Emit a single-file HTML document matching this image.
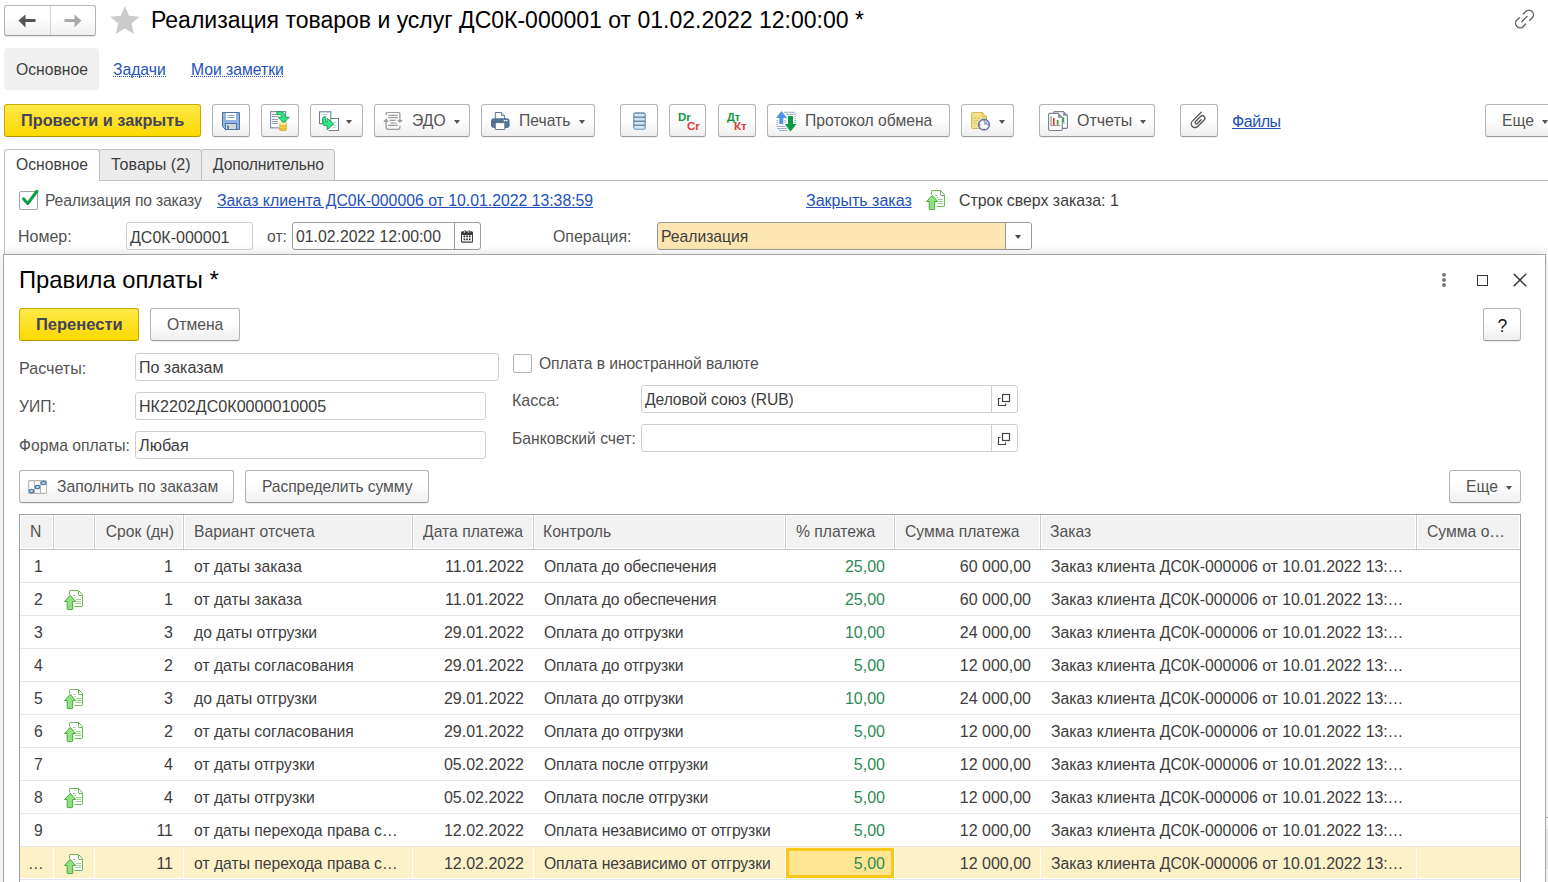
<!DOCTYPE html>
<html><head><meta charset="utf-8">
<style>
*{box-sizing:border-box;margin:0;padding:0}
html,body{width:1548px;height:882px;overflow:hidden;background:#fff;font-family:"Liberation Sans",sans-serif;font-size:15.7px;color:#525252}
.a{position:absolute}
.t{position:absolute;white-space:nowrap;line-height:18px}
.btn{position:absolute;border:1px solid #b4b4b4;border-bottom-color:#9c9c9c;border-radius:3px;background:linear-gradient(#fff 0%,#fff 40%,#efefef 100%);box-shadow:0 1px 0 rgba(0,0,0,.08)}
.ybtn{position:absolute;border:1px solid #c9a800;border-bottom-color:#b39500;border-radius:3px;background:linear-gradient(#ffe94a 0%,#fbd900 100%)}
.fld{position:absolute;border:1px solid #cfcfcf;border-radius:3px;background:#fff}
.lnk{color:#2352b8;text-decoration:underline}
.dd{position:absolute;width:0;height:0;border-left:3.5px solid transparent;border-right:3.5px solid transparent;border-top:4px solid #555}
</style></head><body>
<svg width="0" height="0" style="position:absolute"><defs>
<g id="upd">
 <path d="M5.5 4.5V1.2Q5.5 0.5 6.2 0.5H14.5L18.5 4.5V15.8Q18.5 16.5 17.8 16.5H10.5" fill="#fff" stroke="#6cb85a" stroke-width="1"/>
 <path d="M14.5 0.5V4.8Q14.5 5.5 15.2 5.5H18.5" fill="none" stroke="#6cb85a" stroke-width="1"/>
 <path d="M9 5.5H11.5M10.5 7.5H11.7M12 9.5H17M12.5 11.5H17M11.5 13.5H17" stroke="#8fcb80" stroke-width="0.9"/>
 <path d="M6.3 5.3L11.6 11.5H8.7V18.8Q8.7 19.6 7.9 19.6H4Q3.2 19.6 3.2 18.8V11.5H0.5Z" fill="#92e084" stroke="#48a838" stroke-width="1" stroke-linejoin="round"/>
</g>
</defs></svg>

<!-- ===== TOP BAR ===== -->
<div class="btn" style="left:4px;top:5px;width:92px;height:31px"></div>
<div class="a" style="left:50px;top:6px;width:1px;height:29px;background:#d4d4d4"></div>
<svg class="a" style="left:18px;top:13.6px" width="20" height="15" viewBox="0 0 20 15"><path d="M0.5 6.5L7.5 0.5V5H17.5V8H7.5V13.5Z" fill="#555"/></svg>
<svg class="a" style="left:63px;top:13.6px" width="20" height="15" viewBox="0 0 20 15"><path d="M18.5 6.5L11.5 0.5V5H1.5V8H11.5V13.5Z" fill="#aaa"/></svg>
<svg class="a" style="left:109.5px;top:6px" width="30" height="29" viewBox="0 0 30 29"><path d="M14.85 0.10L18.96 9.74L29.40 10.67L21.51 17.56L23.84 27.78L14.85 22.40L5.86 27.78L8.19 17.56L0.30 10.67L10.74 9.74Z" fill="#cbcbcb"/></svg>
<div class="t" style="left:151px;top:7px;font-size:23px;line-height:26px;color:#000">Реализация товаров и услуг ДС0К-000001 от 01.02.2022 12:00:00 *</div>


<!-- ===== SUB NAV ===== -->
<div class="a" style="left:4px;top:48px;width:95px;height:42px;background:#f0f0f0;border-radius:4px"></div>
<div class="t" style="left:16px;top:61px;color:#3d3d3d">Основное</div>
<div class="t" style="left:113px;top:61px;color:#2352b8">Задачи</div>
<div class="a" style="left:113px;top:76px;width:53px;height:1px;border-top:1px dotted #2352b8"></div>
<div class="t" style="left:191px;top:61px;color:#2352b8">Мои заметки</div>
<div class="a" style="left:191px;top:76px;width:92px;height:1px;border-top:1px dotted #2352b8"></div>

<!-- ===== TOOLBAR ===== -->
<div class="ybtn" style="left:4px;top:104px;width:197px;height:33px"></div>
<div class="t" style="left:21px;top:111px;font-weight:bold;color:#44445a;font-size:16.3px">Провести и закрыть</div>

<div class="btn" style="left:212px;top:104px;width:38px;height:33px"></div>
<div class="btn" style="left:261px;top:104px;width:38px;height:33px"></div>
<div class="btn" style="left:310px;top:104px;width:53px;height:33px"></div>
<div class="btn" style="left:374px;top:104px;width:96px;height:33px"></div>
<div class="btn" style="left:481px;top:104px;width:114px;height:33px"></div>
<div class="btn" style="left:620px;top:104px;width:38px;height:33px"></div>
<div class="btn" style="left:669px;top:104px;width:37px;height:33px"></div>
<div class="btn" style="left:718px;top:104px;width:38px;height:33px"></div>
<div class="btn" style="left:767px;top:104px;width:183px;height:33px"></div>
<div class="btn" style="left:961px;top:104px;width:53px;height:33px"></div>
<div class="btn" style="left:1039px;top:104px;width:116px;height:33px"></div>
<div class="btn" style="left:1180px;top:104px;width:38px;height:33px"></div>
<div class="btn" style="left:1485px;top:104px;width:80px;height:33px"></div>

<div class="t" style="left:412px;top:112px">ЭДО</div>
<div class="t" style="left:519px;top:112px">Печать</div>
<div class="t" style="left:805px;top:112px">Протокол обмена</div>
<div class="t" style="left:1077px;top:112px;font-size:16px">Отчеты</div>
<div class="t lnk" style="left:1232px;top:113px;font-size:16px;letter-spacing:-0.45px">Файлы</div>
<div class="t" style="left:1502px;top:112px">Еще</div>

<div class="dd" style="left:346px;top:120px"></div>
<div class="dd" style="left:454px;top:120px"></div>
<div class="dd" style="left:579px;top:120px"></div>
<div class="dd" style="left:998.5px;top:120px"></div>
<div class="dd" style="left:1140px;top:120px"></div>
<div class="dd" style="left:1542px;top:120px"></div>

<!-- toolbar icons -->
<svg class="a" style="left:222px;top:112px" width="18" height="18" viewBox="0 0 18 18">
 <path d="M0.5 0.5H17.5V17.5H3.5L0.5 14.5Z" fill="#8db4e2" stroke="#4f74a8"/>
 <rect x="4" y="1" width="10" height="7" fill="#fff"/>
 <path d="M5.5 3.5H12.5M5.5 5.5H12.5" stroke="#8aa7cc" stroke-width="1"/>
 <rect x="3.5" y="11.5" width="11" height="6" fill="#d3d9d8" stroke="#4f74a8" stroke-width="1"/>
 <rect x="5" y="13.6" width="2" height="3.4" fill="#5b86c0"/>
</svg>
<svg class="a" style="left:270px;top:111px" width="22" height="21" viewBox="0 0 22 21">
 <rect x="0.6" y="0.6" width="15" height="16.2" fill="#fff" stroke="#8191a8" stroke-width="1.2"/>
 <path d="M2 3.4H8M2 5.4H8M2 8.4H8M2 10.4H8M2 12.4H8" stroke="#8996ab" stroke-width="1"/>
 <ellipse cx="13" cy="18.2" rx="3.9" ry="1.7" fill="#e9c640" stroke="#c9a020" stroke-width="0.5"/>
 <ellipse cx="13" cy="16.2" rx="3.9" ry="1.7" fill="#f3d85a" stroke="#c9a020" stroke-width="0.5"/>
 <ellipse cx="13" cy="14.2" rx="3.9" ry="1.7" fill="#f1d24e" stroke="#c9a020" stroke-width="0.5"/>
 <ellipse cx="13" cy="12.4" rx="3.9" ry="1.5" fill="#fdf3c0" stroke="#d8b840" stroke-width="0.5"/>
 <path d="M7 0.5Q11 0.1 13.6 2Q15.2 3.5 15.4 6.3H19.3L13.5 11.7L8 6.3H12.1Q11.7 4.6 10.3 3.9Q9.2 3.3 7.3 3.7Q6.4 2.2 7 0.5Z" fill="#2fe58a" stroke="#1a9a48" stroke-width="0.9" stroke-linejoin="round"/>
</svg>
<svg class="a" style="left:318px;top:111px" width="22" height="21" viewBox="0 0 22 21">
 <path d="M12.5 7.5H20.5V19.5H10.5" fill="#fff" stroke="#6f8096" stroke-width="1.1"/>
 <path d="M15.5 11.5H18.5M15.5 14.5H18.5M15 16.5H18.5" stroke="#b8c2ce" stroke-width="0.8"/>
 <rect x="1.5" y="0.8" width="11.3" height="11.8" fill="#fff" stroke="#6f8096" stroke-width="1.1"/>
 <path d="M3.8 3.5H9M6 5.5H9" stroke="#a8b4c2" stroke-width="0.8"/>
 <path d="M4.6 7.4Q4.6 5.8 6.15 5.8Q7.7 5.8 7.7 7.4V10.9H9.2V7.3L15.8 13.1L9.2 18.7V14.7H7.2Q4.6 14.7 4.6 12Z" fill="#30e58b" stroke="#1b9a4a" stroke-width="0.9" stroke-linejoin="round"/>
</svg>
<svg class="a" style="left:383px;top:112px" width="21" height="18" viewBox="0 0 21 18">
 <g fill="none" stroke="#9c9c9c" stroke-width="1.3">
 <path d="M3.1 3.2V2.3Q3.1 0.35 5 0.35H15Q16.9 0.35 16.9 2.3V8.5"/>
 <path d="M16.9 13.8V15.3Q16.9 17.3 15 17.3H5Q3.1 17.3 3.1 15.3V9.5"/>
 <path d="M5.2 3.4H14.8M5.2 5.6H14.8M6.6 8.4H12.5M5.2 13.4H14.8"/>
 <path d="M7.2 11H13.7" stroke="#bdbdbd" stroke-width="1.6"/>
 </g>
 <path d="M0.1 9.9H6L3.1 6.6Z M14 8.1H19.9L16.9 11Z" fill="#9c9c9c"/>
</svg>
<svg class="a" style="left:491px;top:112px" width="19" height="19" viewBox="0 0 19 19">
 <path d="M4.3 7V0.5H10.5L13.6 3.6V7" fill="#fff" stroke="#66778a" stroke-width="1"/>
 <path d="M10.5 0.5V3.6H13.6" fill="#dfe6ee" stroke="#66778a" stroke-width="0.9"/>
 <rect x="0.5" y="6.8" width="17.6" height="8.7" rx="2" fill="#55779f" stroke="#3f5f88" stroke-width="0.8"/>
 <path d="M2.5 10.2H16" stroke="#3e5878" stroke-width="1"/>
 <circle cx="13.5" cy="8.6" r="0.9" fill="#fff"/><circle cx="15.6" cy="8.6" r="0.9" fill="#fff"/>
 <path d="M4.3 10.7H13.8V17.5H4.3Z" fill="#fff" stroke="#66778a" stroke-width="1"/>
</svg>
<svg class="a" style="left:633px;top:112px" width="13" height="18" viewBox="0 0 13 18">
 <rect x="0.2" y="0.2" width="12.6" height="17.6" rx="2.2" fill="#6d8daa"/>
 <g fill="#d2e5f5"><rect x="1.3" y="1.8" width="10.4" height="2.6" rx="0.8"/><rect x="1.3" y="5.9" width="10.4" height="2.6" rx="0.8"/><rect x="1.3" y="10" width="10.4" height="2.6" rx="0.8"/><rect x="1.3" y="14.1" width="10.4" height="2.6" rx="0.8"/></g>
</svg>
<div class="a" style="left:678px;top:111px;font:bold 11.4px/13px 'Liberation Sans',sans-serif;color:#109640">Dr</div>
<div class="a" style="left:687px;top:119.3px;font:bold 11.6px/13px 'Liberation Sans',sans-serif;color:#e03a3a">Cr</div>
<div class="a" style="left:727px;top:110.5px;font:bold 11px/13px 'Liberation Sans',sans-serif;color:#109640">Дт</div>
<div class="a" style="left:734px;top:119.3px;font:bold 11.6px/13px 'Liberation Sans',sans-serif;color:#e03a3a">Кт</div>
<svg class="a" style="left:776px;top:111px" width="21" height="21" viewBox="0 0 21 21">
 <path d="M8 1.3H19M10 3.3H20M18.5 5.5H20M18.5 7.5H20M18.5 9.5H20M18.5 11.5H20M0.5 9.5H2M0.5 11.5H2M0.5 13.5H2M8.5 9.5H10M8.5 11.5H10M0.5 15.5H9M1 17.5H11M3 19.5H11" stroke="#93a7bb" stroke-width="0.9"/>
 <path d="M5.5 0L11 7H7.3V13H3.3V7H0Z" fill="#4f94ea"/>
 <path d="M12 5H17V13H20.5L14.5 20.5L8.8 13H12Z" fill="#0c9a42"/>
</svg>
<svg class="a" style="left:971px;top:112px" width="20" height="19" viewBox="0 0 20 19">
 <path d="M0.5 1.5Q0.5 0.5 1.5 0.5H11.5L15.5 4.5V15.5Q15.5 16.5 14.5 16.5H1.5Q0.5 16.5 0.5 15.5Z" fill="#f3e08e" stroke="#d6b458"/>
 <path d="M11.5 0.5V3.5Q11.5 4.5 12.5 4.5H15.5" fill="#f3e08e" stroke="#d6b458"/>
 <path d="M2.5 6H5M6 6H9M2.5 8.5H4M5 8.5H7M2.5 11H6" stroke="#cdb870" stroke-width="0.8"/>
 <circle cx="13" cy="12.7" r="5.3" fill="#fff" stroke="#5b80b5" stroke-width="1.6"/>
 <path d="M13 12.7V8.9A3.8 3.8 0 0 1 16.8 12.7Z" fill="#8fb0da"/>
 <circle cx="13" cy="8.5" r="0.8" fill="#e04040"/><circle cx="13" cy="17" r="0.8" fill="#e04040"/><circle cx="8.8" cy="12.7" r="0.8" fill="#e04040"/><circle cx="17.2" cy="12.7" r="0.8" fill="#e04040"/>
</svg>
<svg class="a" style="left:1048px;top:111px" width="21" height="21" viewBox="0 0 21 21">
 <path d="M5.6 1.8Q5.6 0.6 6.8 0.6H15.3L19.4 4.7V16.2Q19.4 17.4 18.2 17.4H6.8Q5.6 17.4 5.6 16.2Z" fill="#fff" stroke="#74838f" stroke-width="1.1"/>
 <path d="M15.3 0.6V4.7H19.4Z" fill="#7f8e9a"/>
 <path d="M15.2 6.2V11.2" stroke="#3aa83a" stroke-width="2"/><path d="M14.5 12H17" stroke="#b8b8b8" stroke-width="1.3"/>
 <path d="M0.6 3.6Q0.6 2.4 1.8 2.4H10L14.3 6.7V18.3Q14.3 19.5 13.1 19.5H1.8Q0.6 19.5 0.6 18.3Z" fill="#fff" stroke="#74838f" stroke-width="1.1"/>
 <path d="M10 2.4V6.7H14.3Z" fill="#7f8e9a"/>
 <path d="M3.1 5.2V14.5M5.7 7V14.5M9.6 9V14.5" stroke-width="1.5" stroke="#a8a8a8"/>
 <path d="M5.7 7V14.5" stroke="#e8321e" stroke-width="1.5"/><path d="M9.6 9V14.5" stroke="#2fa52a" stroke-width="1.5"/>
 <path d="M2.3 14.6H12.5" stroke="#9a9a9a" stroke-width="1"/>
</svg>
<svg class="a" style="left:1185px;top:108px" width="26" height="26" viewBox="0 0 26 26">
 <g transform="translate(16.2,4.3) rotate(45) scale(1.04)"><path d="M0 0V12A3.6 3.6 0 0 0 7.2 12V3.2A2.4 2.4 0 0 0 2.4 3.2V10.2A1.3 1.3 0 0 0 5 10.2V5" fill="none" stroke="#555" stroke-width="1.3" stroke-linecap="round"/></g>
</svg>


<!-- misc icons -->
<svg class="a" style="left:1514px;top:9px" width="22" height="21" viewBox="0 0 22 21">
 <g fill="none" stroke="#606060" stroke-width="1.4" stroke-linecap="round">
 <path d="M9.3 4.9L11.7 2.5A4.5 4.5 0 0 1 18.1 8.9L15.7 11.3"/>
 <path d="M11.6 15.1L9.3 17.5A4.5 4.5 0 0 1 2.9 11.1L5.3 8.7"/>
 <path d="M7.8 12.7L13 7.4"/>
 </g>
</svg>

<svg class="a" style="left:926px;top:190px" width="20" height="21" viewBox="0 0 20 21"><use href="#upd"/></svg>





<!-- ===== TABS ===== -->
<div class="a" style="left:4px;top:180px;width:1544px;height:1px;background:#b8b8b8"></div>
<div class="a" style="left:4px;top:180px;width:1px;height:80px;background:#c8c8c8"></div>
<div class="a" style="left:4px;top:149px;width:96px;height:32px;background:#fff;border:1px solid #c0c0c0;border-bottom:none;border-radius:3px 3px 0 0"></div>
<div class="a" style="left:99px;top:149px;width:103px;height:32px;background:#ececec;border:1px solid #c0c0c0;border-radius:3px 3px 0 0"></div>
<div class="a" style="left:201px;top:149px;width:134px;height:32px;background:#ececec;border:1px solid #c0c0c0;border-radius:3px 3px 0 0"></div>
<div class="t" style="left:16px;top:156px;color:#3d3d3d">Основное</div>
<div class="t" style="left:111px;top:155px;color:#3d3d3d;font-size:16.1px">Товары (2)</div>
<div class="t" style="left:213px;top:156px;color:#3d3d3d;font-size:15.7px;letter-spacing:-0.17px">Дополнительно</div>

<!-- ===== FORM ROWS ===== -->
<div class="a" style="left:19px;top:191px;width:19px;height:19px;border:1px solid #a4a4a4;border-radius:2px;background:#fff"></div>
<svg class="a" style="left:19px;top:188px" width="22" height="22" viewBox="0 0 22 22"><path d="M4.5 10.8L8.7 15.6L17.9 3.3" fill="none" stroke="#0e9e46" stroke-width="3.1" stroke-linecap="round" stroke-linejoin="round"/></svg>
<div class="t" style="left:45px;top:192px;font-size:15.7px;letter-spacing:-0.16px">Реализация по заказу</div>
<div class="t lnk" style="left:217px;top:192px;font-size:15.8px">Заказ клиента ДС0К-000006 от 10.01.2022 13:38:59</div>
<div class="t lnk" style="left:806px;top:192px;font-size:16px">Закрыть заказ</div>
<div class="t" style="left:959px;top:192px;color:#3d3d3d;font-size:15.9px">Строк сверх заказа: 1</div>

<div class="t" style="left:18px;top:228px;font-size:16px">Номер:</div>
<div class="fld" style="left:126px;top:222px;width:127px;height:28px"></div>
<div class="t" style="left:130px;top:228px;color:#3d3d3d;font-size:16.05px">ДС0К-000001</div>
<div class="t" style="left:267px;top:228px">от:</div>
<div class="fld" style="left:292px;top:222px;width:189px;height:28px;border-color:#9c9c9c"></div>
<div class="a" style="left:454px;top:223px;width:1px;height:26px;background:#9c9c9c"></div>
<div class="t" style="left:296px;top:228px;color:#3d3d3d;font-size:15.8px">01.02.2022 12:00:00</div>
<svg class="a" style="left:461px;top:230px" width="12" height="13" viewBox="0 0 12 13">
 <path d="M1.2 1.2Q0 1.4 0 2.8V11.5Q0 12.8 1.3 12.8H10.7Q12 12.8 12 11.5V2.8Q12 1.4 10.8 1.2H9Q8.8 0 7.6 0.4Q7.2 0.5 7.1 1.2H4.9Q4.8 0 3.6 0.3Q3 0.5 3 1.2Z M1 5H11V11.5H1Z" fill="#3c3c3c" fill-rule="evenodd"/>
 <path d="M3.6 1.1V2.5M7.8 1.1V2.5" stroke="#fff" stroke-width="0.8" stroke-linecap="round"/>
 <path d="M2.5 6.4H4.2M5.2 6.4H6.9M7.9 6.4H9.6M2.5 9.4H4.2M5.2 9.4H6.9M7.9 9.4H9.6" stroke="#2a2a2a" stroke-width="1.6"/>
</svg>
<div class="t" style="left:553px;top:228px;font-size:15.9px">Операция:</div>
<div class="fld" style="left:657px;top:222px;width:375px;height:28px;background:#fde6b1;border-color:#999"></div>
<div class="a" style="left:1005px;top:223px;width:26px;height:26px;background:#fff;border-left:1px solid #999;border-radius:0 2px 2px 0"></div>
<div class="dd" style="left:1015px;top:235px;border-left-width:3.5px;border-right-width:3.5px;border-top:4px solid #444"></div>
<div class="t" style="left:661px;top:228px;color:#3d3d3d">Реализация</div>

<!-- ===== DIALOG ===== -->

<div class="a" style="left:3px;top:254px;width:1543px;height:640px;background:#fff;border:1px solid #a6a6a6;box-shadow:0 -1px 9px rgba(0,0,0,.13)"></div>

<svg class="a" style="left:1440px;top:272px" width="8" height="17" viewBox="0 0 8 17"><g fill="#707070"><circle cx="4" cy="2.8" r="1.9"/><circle cx="4" cy="7.9" r="1.9"/><circle cx="4" cy="13" r="1.9"/></g></svg>
<div class="a" style="left:1477px;top:275px;width:11px;height:11px;border:1.5px solid #333"></div>
<svg class="a" style="left:1513px;top:273px" width="14" height="14" viewBox="0 0 14 14"><path d="M1.2 1.2L12.8 12.8M12.8 1.2L1.2 12.8" stroke="#333" stroke-width="1.5" stroke-linecap="round"/></svg>
<div class="t" style="left:19px;top:267px;font-size:23.8px;line-height:26px;color:#000">Правила оплаты *</div>

<div class="ybtn" style="left:19px;top:308px;width:120px;height:33px"></div>
<div class="t" style="left:36px;top:315px;font-weight:bold;color:#44445a;font-size:16.5px">Перенести</div>
<div class="btn" style="left:150px;top:308px;width:90px;height:33px"></div>
<div class="t" style="left:167px;top:316px;font-size:15.7px;letter-spacing:0px">Отмена</div>
<div class="btn" style="left:1483px;top:308px;width:38px;height:33px"></div>
<div class="t" style="left:1497.5px;top:316.5px;color:#111;font-size:17.5px">?</div>

<div class="t" style="left:19px;top:359px;font-size:16.1px">Расчеты:</div>
<div class="fld" style="left:135px;top:353px;width:364px;height:28px"></div>
<div class="t" style="left:139px;top:359px;color:#3d3d3d;font-size:16px">По заказам</div>
<div class="t" style="left:19px;top:398px">УИП:</div>
<div class="fld" style="left:135px;top:392px;width:351px;height:28px"></div>
<div class="t" style="left:139px;top:397px;color:#3d3d3d;font-size:16.1px">НК2202ДС0К0000010005</div>
<div class="t" style="left:19px;top:437px">Форма оплаты:</div>
<div class="fld" style="left:135px;top:431px;width:351px;height:28px"></div>
<div class="t" style="left:139px;top:436px;color:#3d3d3d;font-size:16.3px">Любая</div>

<div class="a" style="left:513px;top:354px;width:19px;height:19px;border:1px solid #b4b4b4;border-radius:2px"></div>
<div class="t" style="left:539px;top:355px;font-size:15.7px;letter-spacing:-0.09px">Оплата в иностранной валюте</div>
<div class="t" style="left:512px;top:391px;font-size:16.1px">Касса:</div>
<div class="fld" style="left:641px;top:385px;width:377px;height:28px"></div>
<div class="a" style="left:991px;top:386px;width:1px;height:26px;background:#cfcfcf"></div>
<div class="t" style="left:645px;top:391px;color:#3d3d3d;font-size:15.7px;letter-spacing:-0.1px">Деловой союз (RUB)</div>
<div class="t" style="left:512px;top:430px">Банковский счет:</div>
<div class="fld" style="left:641px;top:424px;width:377px;height:28px"></div>
<div class="a" style="left:991px;top:425px;width:1px;height:26px;background:#cfcfcf"></div>

<div class="btn" style="left:19px;top:470px;width:215px;height:33px"></div>
<div class="t" style="left:57px;top:478px">Заполнить по заказам</div>
<div class="btn" style="left:245px;top:470px;width:184px;height:33px"></div>
<div class="t" style="left:262px;top:478px;font-size:15.7px;letter-spacing:-0.1px">Распределить сумму</div>
<div class="btn" style="left:1449px;top:470px;width:72px;height:33px"></div>
<div class="t" style="left:1466px;top:478px">Еще</div>
<div class="dd" style="left:1506px;top:486px"></div>

<svg class="a" style="left:997px;top:393px" width="14" height="14" viewBox="0 0 14 14">
 <g fill="none" stroke="#444" stroke-width="1.2"><rect x="5.5" y="1.5" width="7" height="7"/><path d="M3.5 5.5H1.5V12.5H8.5V10.5"/></g>
</svg>
<svg class="a" style="left:997px;top:432px" width="14" height="14" viewBox="0 0 14 14">
 <g fill="none" stroke="#444" stroke-width="1.2"><rect x="5.5" y="1.5" width="7" height="7"/><path d="M3.5 5.5H1.5V12.5H8.5V10.5"/></g>
</svg>
<svg class="a" style="left:28px;top:480px" width="19" height="14" viewBox="0 0 19 14">
 <rect x="0.6" y="0.6" width="17.8" height="12.8" rx="1" fill="#fff" stroke="#b4b4b4" stroke-width="1.1"/>
 <path d="M6.5 0.6V13.4M12.5 0.6V13.4" stroke="#b4b4b4" stroke-width="1.1"/>
 <g fill="#c6dcee" stroke="#4f7aa0" stroke-width="1.3">
 <ellipse cx="3.5" cy="11" rx="2.2" ry="1.7"/><ellipse cx="9.5" cy="7" rx="2.2" ry="1.7"/><ellipse cx="15.5" cy="3" rx="2.2" ry="1.7"/>
 </g>
</svg>
<!-- ===== TABLE ===== -->
<!--TBL-->
<div class="a" style="left:19px;top:514px;width:1502px;height:400px;border:1px solid #a0a0a0;background:#fff"></div>
<div class="a" style="left:20px;top:515px;width:1500px;height:34px;background:#f2f2f2;border:1px solid #fff"></div>
<div class="a" style="left:20px;top:549px;width:1500px;height:1px;background:#c4c4c4"></div>
<div class="a" style="left:52px;top:515px;width:3px;height:34px;background:#fff"></div>
<div class="a" style="left:53px;top:515px;width:1px;height:34px;background:#cdcdcd"></div>
<div class="a" style="left:93px;top:515px;width:3px;height:34px;background:#fff"></div>
<div class="a" style="left:94px;top:515px;width:1px;height:34px;background:#cdcdcd"></div>
<div class="a" style="left:182px;top:515px;width:3px;height:34px;background:#fff"></div>
<div class="a" style="left:183px;top:515px;width:1px;height:34px;background:#cdcdcd"></div>
<div class="a" style="left:411px;top:515px;width:3px;height:34px;background:#fff"></div>
<div class="a" style="left:412px;top:515px;width:1px;height:34px;background:#cdcdcd"></div>
<div class="a" style="left:532px;top:515px;width:3px;height:34px;background:#fff"></div>
<div class="a" style="left:533px;top:515px;width:1px;height:34px;background:#cdcdcd"></div>
<div class="a" style="left:784px;top:515px;width:3px;height:34px;background:#fff"></div>
<div class="a" style="left:785px;top:515px;width:1px;height:34px;background:#cdcdcd"></div>
<div class="a" style="left:893px;top:515px;width:3px;height:34px;background:#fff"></div>
<div class="a" style="left:894px;top:515px;width:1px;height:34px;background:#cdcdcd"></div>
<div class="a" style="left:1039px;top:515px;width:3px;height:34px;background:#fff"></div>
<div class="a" style="left:1040px;top:515px;width:1px;height:34px;background:#cdcdcd"></div>
<div class="a" style="left:1415px;top:515px;width:3px;height:34px;background:#fff"></div>
<div class="a" style="left:1416px;top:515px;width:1px;height:34px;background:#cdcdcd"></div>
<div class="t" style="left:30px;top:523px;">N</div>
<div class="t" style="right:1374px;top:523px;">Срок (дн)</div>
<div class="t" style="left:194px;top:523px;">Вариант отсчета</div>
<div class="t" style="right:1025px;top:523px;">Дата платежа</div>
<div class="t" style="left:543px;top:523px;">Контроль</div>
<div class="t" style="left:796px;top:523px;">% платежа</div>
<div class="t" style="left:905px;top:523px;">Сумма платежа</div>
<div class="t" style="left:1050px;top:523px;">Заказ</div>
<div class="t" style="left:1427px;top:523px;">Сумма о…</div>
<div class="a" style="left:20px;top:582px;width:1500px;height:1px;background:#e6e6e6"></div>
<div class="t" style="left:34px;top:558px;color:#3d3d3d">1</div>
<div class="t" style="right:1375px;top:558px;color:#3d3d3d;font-size:16px">1</div>
<div class="t" style="left:194px;top:558px;color:#3d3d3d">от даты заказа</div>
<div class="t" style="right:1024px;top:558px;color:#3d3d3d;font-size:16px">11.01.2022</div>
<div class="t" style="left:544px;top:558px;color:#3d3d3d;letter-spacing:-0.09px">Оплата до обеспечения</div>
<div class="t" style="right:663px;top:558px;color:#2e8a57;font-size:16px">25,00</div>
<div class="t" style="right:517px;top:558px;color:#3d3d3d;font-size:16px">60 000,00</div>
<div class="t" style="left:1051px;top:558px;color:#3d3d3d;font-size:15.8px">Заказ клиента ДС0К-000006 от 10.01.2022 13:…</div>
<div class="a" style="left:20px;top:615px;width:1500px;height:1px;background:#e6e6e6"></div>
<div class="t" style="left:34px;top:591px;color:#3d3d3d">2</div>
<svg class="a ic" style="left:64px;top:590px" width="20" height="21"><use href="#upd"/></svg>
<div class="t" style="right:1375px;top:591px;color:#3d3d3d;font-size:16px">1</div>
<div class="t" style="left:194px;top:591px;color:#3d3d3d">от даты заказа</div>
<div class="t" style="right:1024px;top:591px;color:#3d3d3d;font-size:16px">11.01.2022</div>
<div class="t" style="left:544px;top:591px;color:#3d3d3d;letter-spacing:-0.09px">Оплата до обеспечения</div>
<div class="t" style="right:663px;top:591px;color:#2e8a57;font-size:16px">25,00</div>
<div class="t" style="right:517px;top:591px;color:#3d3d3d;font-size:16px">60 000,00</div>
<div class="t" style="left:1051px;top:591px;color:#3d3d3d;font-size:15.8px">Заказ клиента ДС0К-000006 от 10.01.2022 13:…</div>
<div class="a" style="left:20px;top:648px;width:1500px;height:1px;background:#e6e6e6"></div>
<div class="t" style="left:34px;top:624px;color:#3d3d3d">3</div>
<div class="t" style="right:1375px;top:624px;color:#3d3d3d;font-size:16px">3</div>
<div class="t" style="left:194px;top:624px;color:#3d3d3d">до даты отгрузки</div>
<div class="t" style="right:1024px;top:624px;color:#3d3d3d;font-size:16px">29.01.2022</div>
<div class="t" style="left:544px;top:624px;color:#3d3d3d;letter-spacing:-0.09px">Оплата до отгрузки</div>
<div class="t" style="right:663px;top:624px;color:#2e8a57;font-size:16px">10,00</div>
<div class="t" style="right:517px;top:624px;color:#3d3d3d;font-size:16px">24 000,00</div>
<div class="t" style="left:1051px;top:624px;color:#3d3d3d;font-size:15.8px">Заказ клиента ДС0К-000006 от 10.01.2022 13:…</div>
<div class="a" style="left:20px;top:681px;width:1500px;height:1px;background:#e6e6e6"></div>
<div class="t" style="left:34px;top:657px;color:#3d3d3d">4</div>
<div class="t" style="right:1375px;top:657px;color:#3d3d3d;font-size:16px">2</div>
<div class="t" style="left:194px;top:657px;color:#3d3d3d">от даты согласования</div>
<div class="t" style="right:1024px;top:657px;color:#3d3d3d;font-size:16px">29.01.2022</div>
<div class="t" style="left:544px;top:657px;color:#3d3d3d;letter-spacing:-0.09px">Оплата до отгрузки</div>
<div class="t" style="right:663px;top:657px;color:#2e8a57;font-size:16px">5,00</div>
<div class="t" style="right:517px;top:657px;color:#3d3d3d;font-size:16px">12 000,00</div>
<div class="t" style="left:1051px;top:657px;color:#3d3d3d;font-size:15.8px">Заказ клиента ДС0К-000006 от 10.01.2022 13:…</div>
<div class="a" style="left:20px;top:714px;width:1500px;height:1px;background:#e6e6e6"></div>
<div class="t" style="left:34px;top:690px;color:#3d3d3d">5</div>
<svg class="a ic" style="left:64px;top:689px" width="20" height="21"><use href="#upd"/></svg>
<div class="t" style="right:1375px;top:690px;color:#3d3d3d;font-size:16px">3</div>
<div class="t" style="left:194px;top:690px;color:#3d3d3d">до даты отгрузки</div>
<div class="t" style="right:1024px;top:690px;color:#3d3d3d;font-size:16px">29.01.2022</div>
<div class="t" style="left:544px;top:690px;color:#3d3d3d;letter-spacing:-0.09px">Оплата до отгрузки</div>
<div class="t" style="right:663px;top:690px;color:#2e8a57;font-size:16px">10,00</div>
<div class="t" style="right:517px;top:690px;color:#3d3d3d;font-size:16px">24 000,00</div>
<div class="t" style="left:1051px;top:690px;color:#3d3d3d;font-size:15.8px">Заказ клиента ДС0К-000006 от 10.01.2022 13:…</div>
<div class="a" style="left:20px;top:747px;width:1500px;height:1px;background:#e6e6e6"></div>
<div class="t" style="left:34px;top:723px;color:#3d3d3d">6</div>
<svg class="a ic" style="left:64px;top:722px" width="20" height="21"><use href="#upd"/></svg>
<div class="t" style="right:1375px;top:723px;color:#3d3d3d;font-size:16px">2</div>
<div class="t" style="left:194px;top:723px;color:#3d3d3d">от даты согласования</div>
<div class="t" style="right:1024px;top:723px;color:#3d3d3d;font-size:16px">29.01.2022</div>
<div class="t" style="left:544px;top:723px;color:#3d3d3d;letter-spacing:-0.09px">Оплата до отгрузки</div>
<div class="t" style="right:663px;top:723px;color:#2e8a57;font-size:16px">5,00</div>
<div class="t" style="right:517px;top:723px;color:#3d3d3d;font-size:16px">12 000,00</div>
<div class="t" style="left:1051px;top:723px;color:#3d3d3d;font-size:15.8px">Заказ клиента ДС0К-000006 от 10.01.2022 13:…</div>
<div class="a" style="left:20px;top:780px;width:1500px;height:1px;background:#e6e6e6"></div>
<div class="t" style="left:34px;top:756px;color:#3d3d3d">7</div>
<div class="t" style="right:1375px;top:756px;color:#3d3d3d;font-size:16px">4</div>
<div class="t" style="left:194px;top:756px;color:#3d3d3d">от даты отгрузки</div>
<div class="t" style="right:1024px;top:756px;color:#3d3d3d;font-size:16px">05.02.2022</div>
<div class="t" style="left:544px;top:756px;color:#3d3d3d;letter-spacing:-0.09px">Оплата после отгрузки</div>
<div class="t" style="right:663px;top:756px;color:#2e8a57;font-size:16px">5,00</div>
<div class="t" style="right:517px;top:756px;color:#3d3d3d;font-size:16px">12 000,00</div>
<div class="t" style="left:1051px;top:756px;color:#3d3d3d;font-size:15.8px">Заказ клиента ДС0К-000006 от 10.01.2022 13:…</div>
<div class="a" style="left:20px;top:813px;width:1500px;height:1px;background:#e6e6e6"></div>
<div class="t" style="left:34px;top:789px;color:#3d3d3d">8</div>
<svg class="a ic" style="left:64px;top:788px" width="20" height="21"><use href="#upd"/></svg>
<div class="t" style="right:1375px;top:789px;color:#3d3d3d;font-size:16px">4</div>
<div class="t" style="left:194px;top:789px;color:#3d3d3d">от даты отгрузки</div>
<div class="t" style="right:1024px;top:789px;color:#3d3d3d;font-size:16px">05.02.2022</div>
<div class="t" style="left:544px;top:789px;color:#3d3d3d;letter-spacing:-0.09px">Оплата после отгрузки</div>
<div class="t" style="right:663px;top:789px;color:#2e8a57;font-size:16px">5,00</div>
<div class="t" style="right:517px;top:789px;color:#3d3d3d;font-size:16px">12 000,00</div>
<div class="t" style="left:1051px;top:789px;color:#3d3d3d;font-size:15.8px">Заказ клиента ДС0К-000006 от 10.01.2022 13:…</div>
<div class="a" style="left:20px;top:846px;width:1500px;height:1px;background:#e6e6e6"></div>
<div class="t" style="left:34px;top:822px;color:#3d3d3d">9</div>
<div class="t" style="right:1375px;top:822px;color:#3d3d3d;font-size:16px">11</div>
<div class="t" style="left:194px;top:822px;color:#3d3d3d">от даты перехода права с…</div>
<div class="t" style="right:1024px;top:822px;color:#3d3d3d;font-size:16px">12.02.2022</div>
<div class="t" style="left:544px;top:822px;color:#3d3d3d;letter-spacing:-0.09px">Оплата независимо от отгрузки</div>
<div class="t" style="right:663px;top:822px;color:#2e8a57;font-size:16px">5,00</div>
<div class="t" style="right:517px;top:822px;color:#3d3d3d;font-size:16px">12 000,00</div>
<div class="t" style="left:1051px;top:822px;color:#3d3d3d;font-size:15.8px">Заказ клиента ДС0К-000006 от 10.01.2022 13:…</div>
<div class="a" style="left:20px;top:847px;width:1500px;height:31px;background:#fdf1c8"></div>
<div class="a" style="left:53px;top:847px;width:1px;height:31px;background:#fff"></div>
<div class="a" style="left:94px;top:847px;width:1px;height:31px;background:#fff"></div>
<div class="a" style="left:183px;top:847px;width:1px;height:31px;background:#fff"></div>
<div class="a" style="left:412px;top:847px;width:1px;height:31px;background:#fff"></div>
<div class="a" style="left:533px;top:847px;width:1px;height:31px;background:#fff"></div>
<div class="a" style="left:785px;top:847px;width:1px;height:31px;background:#fff"></div>
<div class="a" style="left:894px;top:847px;width:1px;height:31px;background:#fff"></div>
<div class="a" style="left:1040px;top:847px;width:1px;height:31px;background:#fff"></div>
<div class="a" style="left:1416px;top:847px;width:1px;height:31px;background:#fff"></div>
<div class="a" style="left:786px;top:848px;width:108px;height:30px;background:#fde591;border:3px solid #f9c81a"></div>
<div class="a" style="left:20px;top:879px;width:1500px;height:1px;background:#e6e6e6"></div>
<div class="t" style="left:28px;top:855px;color:#3d3d3d">…</div>
<svg class="a ic" style="left:64px;top:854px" width="20" height="21"><use href="#upd"/></svg>
<div class="t" style="right:1375px;top:855px;color:#3d3d3d;font-size:16px">11</div>
<div class="t" style="left:194px;top:855px;color:#3d3d3d">от даты перехода права с…</div>
<div class="t" style="right:1024px;top:855px;color:#3d3d3d;font-size:16px">12.02.2022</div>
<div class="t" style="left:544px;top:855px;color:#3d3d3d;letter-spacing:-0.09px">Оплата независимо от отгрузки</div>
<div class="t" style="right:663px;top:855px;color:#2e8a57;font-size:16px">5,00</div>
<div class="t" style="right:517px;top:855px;color:#3d3d3d;font-size:16px">12 000,00</div>
<div class="t" style="left:1051px;top:855px;color:#3d3d3d;font-size:15.8px">Заказ клиента ДС0К-000006 от 10.01.2022 13:…</div>
<!--/TBL-->

<div class="a" style="left:1546px;top:817px;width:2px;height:1px;background:#a8a8a8"></div>
<div class="a" style="left:1546px;top:818px;width:2px;height:11px;background:#f2f2f2"></div>
<div class="a" style="left:1546px;top:829px;width:2px;height:40px;background:#e4e4e4"></div>
<div class="a" style="left:1546px;top:869px;width:2px;height:13px;background:#f0f0f0"></div>
</body></html>
